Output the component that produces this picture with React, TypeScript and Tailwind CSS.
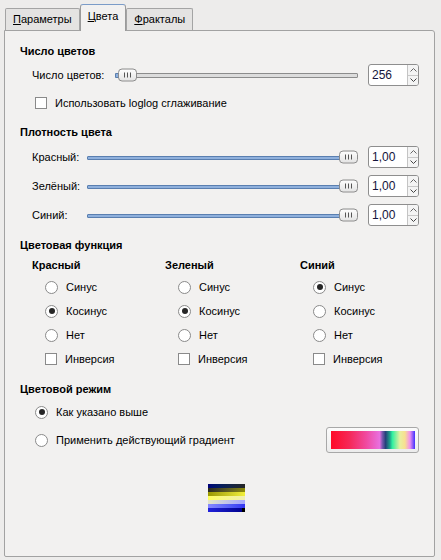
import React from 'react'

const font = { fontFamily: '"Liberation Sans", Arial, sans-serif' }

function Tab({ u, rest, active }: { u: string; rest: string; active?: boolean }) {
  if (active) {
    return (
      <div className="relative z-10 -mb-px flex h-[27px] items-center rounded-t-[3px] border border-b-0 border-[#9a9a9a] border-t-[#7b9cc8] bg-[#f2f1f0] px-[7px] pb-[3px] text-[11px] text-black">
        <span className="underline">{u}</span>
        {rest}
      </div>
    )
  }
  return (
    <div className="flex h-[22px] items-center rounded-t-[2px] border border-b-0 border-[#a4a4a4] bg-[#e4e3e2] px-[7px] text-[11px] text-black">
      <span className="underline">{u}</span>
      {rest}
    </div>
  )
}

function Grip() {
  return (
    <div className="flex gap-[2px]">
      <div className="h-[5px] w-px bg-[#555]" />
      <div className="h-[5px] w-px bg-[#555]" />
      <div className="h-[5px] w-px bg-[#555]" />
    </div>
  )
}

function Handle({ w }: { w: number }) {
  return (
    <div
      className="absolute top-1/2 flex h-[13px] -translate-y-1/2 items-center justify-center rounded-[4px] border border-[#8c8c8c] bg-gradient-to-b from-[#fdfdfd] to-[#e4e4e4]"
      style={{ left: w }}
    >
      <div className="px-[5px]">
        <Grip />
      </div>
    </div>
  )
}

function Spin({ value }: { value: string }) {
  return (
    <div className="flex h-[22px] w-[51px] overflow-hidden rounded-[3px] border border-[#8e8e8e] bg-white">
      <div className="flex flex-1 items-center pl-[3px] text-[12px] text-[#14143c]">{value}</div>
      <div className="flex w-[11px] flex-col border-l border-[#c4c4c4] bg-[#f4f4f4]">
        <div className="flex flex-1 items-center justify-center border-b border-[#c8c8c8]">
          <svg width="7" height="4" viewBox="0 0 7 4"><path d="M0.5 3.5 L3.5 0.5 L6.5 3.5" fill="none" stroke="#666" strokeWidth="1" /></svg>
        </div>
        <div className="flex flex-1 items-center justify-center">
          <svg width="7" height="4" viewBox="0 0 7 4"><path d="M0.5 0.5 L3.5 3.5 L6.5 0.5" fill="none" stroke="#444" strokeWidth="1" /></svg>
        </div>
      </div>
    </div>
  )
}

function Radio({ checked, label }: { checked?: boolean; label: string }) {
  return (
    <div className="flex h-[16px] items-center gap-[8px] text-[11px] text-black">
      <div className="flex h-[13px] w-[13px] items-center justify-center rounded-full border border-[#8a8a8a] bg-white">
        {checked && <div className="h-[6px] w-[6px] rounded-full bg-[#262626]" />}
      </div>
      <span>{label}</span>
    </div>
  )
}

function Check({ label }: { label: string }) {
  return (
    <div className="flex h-[16px] items-center gap-[8px] text-[11px] text-black">
      <div className="h-[12px] w-[12px] border border-[#8a8a8a] bg-white" />
      <span>{label}</span>
    </div>
  )
}

function DensityRow({ label }: { label: string }) {
  return (
    <div className="flex h-[22px] items-center">
      <div className="w-[55px] text-[11px] text-black">{label}</div>
      <div className="relative h-[13px] w-[271px]">
        <div className="absolute left-0 right-[12px] top-[5px] h-[4px] rounded-[1px] border border-[#5a7fb0] bg-[#8fb0dc]" />
        <Handle w={252} />
      </div>
      <div className="ml-[11px]">
        <Spin value="1,00" />
      </div>
    </div>
  )
}

function FuncColumn({ title, sel }: { title: string; sel: number }) {
  return (
    <div className="flex flex-col">
      <div className="flex h-[16px] items-center text-[11px] font-bold text-black">{title}</div>
      <div className="mt-[6px] flex flex-col gap-[8px] pl-[13px]">
        <Radio label="Синус" checked={sel === 0} />
        <Radio label="Косинус" checked={sel === 1} />
        <Radio label="Нет" checked={sel === 2} />
        <Check label="Инверсия" />
      </div>
    </div>
  )
}

const stripes = [
  'from-[#00007a] to-[#262626]',
  'from-[#2a2a20] to-[#8c8a00]',
  'from-[#9a9800] to-[#f2f03a]',
  'from-[#ffff5a] to-[#f0efb0]',
  'from-[#e6e6c8] to-[#a4a4ff]',
  'from-[#8888ff] to-[#3434f0]',
  'from-[#2222dc] to-[#000088]',
]

export default function App() {
  return (
    <div className="h-[560px] w-[441px] bg-[#edeceb] px-[4px] pt-[4px]" style={font}>
      <div className="flex items-end pl-[1px]">
        <Tab u="П" rest="араметры" />
        <Tab u="Ц" rest="вета" active />
        <Tab u="Ф" rest="ракталы" />
      </div>
      <div className="h-[527px] w-[431px] rounded-b-[2px] rounded-tr-[3px] border border-[#a2a2a2] bg-[#f2f1f0] px-[15px] pt-[12px]">
        <div className="flex h-[16px] items-center text-[11px] font-bold text-black">Число цветов</div>
        <div className="mt-[5px] flex h-[22px] items-center pl-[12px]">
          <div className="w-[83px] text-[11px] text-black">Число цветов:</div>
          <div className="relative h-[13px] w-[244px]">
            <div className="absolute left-0 right-0 top-[4px] h-[5px] rounded-[1px] border border-[#8c8c8c] bg-[#dcdcdc]" />
            <div className="absolute left-0 top-[4px] h-[5px] w-[6px] rounded-[1px] border border-[#5a7fb0] bg-[#8fb0dc]" />
            <Handle w={3} />
          </div>
          <div className="ml-[10px]">
            <Spin value="256" />
          </div>
        </div>
        <div className="mt-[9px] pl-[15px]">
          <Check label="Использовать loglog сглаживание" />
        </div>

        <div className="mt-[13px] flex h-[16px] items-center text-[11px] font-bold text-black">Плотность цвета</div>
        <div className="mt-[6px] flex flex-col gap-[7px] pl-[12px]">
          <DensityRow label="Красный:" />
          <DensityRow label="Зелёный:" />
          <DensityRow label="Синий:" />
        </div>

        <div className="mt-[11px] flex h-[16px] items-center text-[11px] font-bold text-black">Цветовая функция</div>
        <div className="mt-[4px] grid grid-cols-[133px_135px_1fr] pl-[12px]">
          <FuncColumn title="Красный" sel={1} />
          <FuncColumn title="Зеленый" sel={1} />
          <FuncColumn title="Синий" sel={0} />
        </div>

        <div className="mt-[14px] flex h-[16px] items-center text-[11px] font-bold text-black">Цветовой режим</div>
        <div className="mt-[7px] pl-[15px]">
          <Radio label="Как указано выше" checked />
        </div>
        <div className="mt-[7px] flex h-[26px] items-center justify-between pl-[15px]">
          <Radio label="Применить действующий градиент" />
          <div className="flex h-[26px] w-[93px] items-center justify-center rounded-[3px] border border-[#a8a8a8] bg-gradient-to-b from-[#fbfbfb] to-[#ececec]">
            <div className="h-[18px] w-[84px] bg-[linear-gradient(to_right,#ff0a28_0%,#f52858_22%,#f04aa0_42%,#e870e0_58%,#7a5ab0_61%,#24407a_65%,#1ea08a_70%,#30f0a0_73%,#e8f0a0_82%,#f8e090_88%,#f090f0_94%,#4030ff_100%)]" />
          </div>
        </div>

        <div className="mt-[31px] flex pl-[188px]">
          <div className="relative flex w-[37px] flex-col">
            {stripes.map((s, i) => (
              <div key={i} className={`h-[4px] bg-gradient-to-r ${s}`} />
            ))}
            <div className="absolute bottom-0 right-0 h-[4px] w-[3px] bg-black" />
          </div>
        </div>
      </div>
    </div>
  )
}
